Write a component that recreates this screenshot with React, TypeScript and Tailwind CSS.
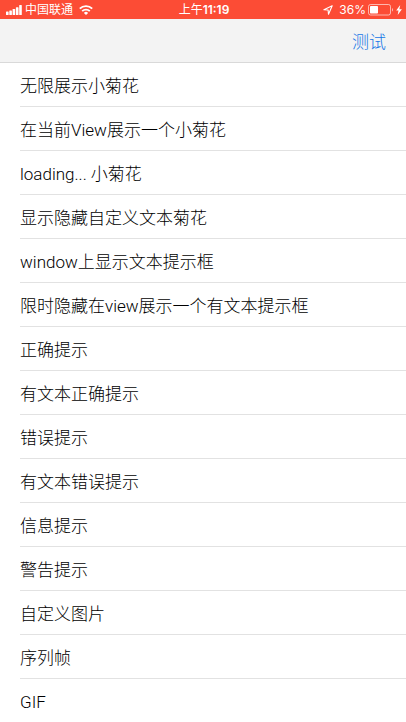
const items: string[] = [
  '无限展示小菊花',
  '在当前View展示一个小菊花',
  'loading... 小菊花',
  '显示隐藏自定义文本菊花',
  'window上显示文本提示框',
  '限时隐藏在view展示一个有文本提示框',
  '正确提示',
  '有文本正确提示',
  '错误提示',
  '有文本错误提示',
  '信息提示',
  '警告提示',
  '自定义图片',
  '序列帧',
  'GIF',
];

function SignalIcon() {
  return (
    <svg width="16" height="10" viewBox="0 0 16 10" fill="currentColor" aria-hidden="true">
      <rect x="0" y="6.5" width="2.6" height="3.5" rx="0.6" />
      <rect x="3.3" y="5.5" width="2.6" height="4.5" rx="0.6" />
      <rect x="6.6" y="4" width="2.6" height="6" rx="0.6" />
      <rect x="9.9" y="2.2" width="2.6" height="7.8" rx="0.6" />
      <rect x="13.2" y="0" width="2.6" height="10" rx="0.6" />
    </svg>
  );
}

function WifiIcon() {
  return (
    <svg width="14" height="10" viewBox="0 0 14 10" fill="none" stroke="currentColor" strokeWidth="1.9" aria-hidden="true">
      <path d="M0.8 3.7a8.8 8.8 0 0 1 12.4 0" />
      <path d="M3.2 6.2a5.4 5.4 0 0 1 7.6 0" />
      <path d="M7 10 4.9 7.9a3 3 0 0 1 4.2 0Z" fill="currentColor" stroke="none" />
    </svg>
  );
}

function LocationIcon() {
  return (
    <svg width="10" height="10" viewBox="0 0 10 10" fill="none" stroke="currentColor" strokeWidth="1.1" strokeLinejoin="round" aria-hidden="true">
      <path d="M9.2 0.8 0.9 4.7l4.2.3.4 4.2Z" />
    </svg>
  );
}

function BatteryIcon() {
  return (
    <svg width="26" height="12" viewBox="0 0 26 12" aria-hidden="true">
      <rect x="0.5" y="0.5" width="22" height="10.5" rx="2" fill="none" stroke="currentColor" strokeOpacity="0.6" />
      <rect x="2" y="2" width="8" height="7.5" rx="0.8" fill="currentColor" />
      <path d="M24 4v3.6c1.4-.5 1.4-3.1 0-3.6Z" fill="currentColor" fillOpacity="0.6" />
    </svg>
  );
}

function BoltIcon() {
  return (
    <svg width="6" height="10" viewBox="0 0 6 10" fill="currentColor" aria-hidden="true">
      <path d="M4.2 0 0.2 5.5h2.3L1.7 10 5.9 4.2H3.4Z" />
    </svg>
  );
}

export default function App() {
  return (
    <div className="bg-white font-['Roboto','Noto_Sans_CJK_SC',sans-serif] text-black">
      <div className="grid h-[19px] grid-cols-[1fr_auto_1fr] items-center bg-[#fc4c35] pr-1 pl-1.5 font-['Inter','Noto_Sans_CJK_SC',sans-serif] text-[12px] leading-[19px] text-white">
        <div className="flex items-center">
          <SignalIcon />
          <span className="mr-1.5 ml-[3px]">中国联通</span>
          <WifiIcon />
        </div>
        <span>
          上午<span className="font-semibold">11:19</span>
        </span>
        <div className="flex items-center justify-end">
          <LocationIcon />
          <span className="mr-0.5 ml-1.5">36%</span>
          <BatteryIcon />
          <span className="ml-0.5">
            <BoltIcon />
          </span>
        </div>
      </div>
      <header className="flex h-11 items-center justify-end border-b border-[#d9d9d9] bg-[#f3f3f3] px-5">
        <button type="button" className="pt-0.5 text-[17px] leading-6 font-light text-[#1476e6]">
          测试
        </button>
      </header>
      <ul className="pl-5">
        {items.map((item) => (
          <li key={item} className="border-b border-[#e2e2e2] last:border-b-0">
            <button type="button" className="block h-[43px] w-full pt-1 text-left text-[17px] leading-[39px] font-light">
              {item}
            </button>
          </li>
        ))}
      </ul>
    </div>
  );
}
